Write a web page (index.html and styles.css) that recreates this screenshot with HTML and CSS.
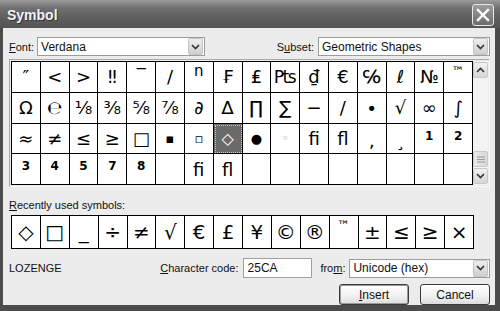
FILE: index.html
```html
<!DOCTYPE html>
<html lang="en">
<head>
  <meta charset="UTF-8">
  <title>Symbol</title>
  <link rel="stylesheet" href="styles.css">
</head>
<body>
  <div class="window">
    <div class="titlebar">
      <span class="title">Symbol</span>
      <span class="closeBtn">
        <svg width="14" height="14" viewBox="0 0 14 14"><path d="M2 2 L12 12 M12 2 L2 12" stroke="#fff" stroke-width="2.4" stroke-linecap="square"/></svg>
      </span>
    </div>

    <div class="dialog">
      <div class="topRow">
        <label class="lbl"><u>F</u>ont:</label>
        <div class="select fontSelect">
          <span>Verdana</span>
          <span class="dropBtn"><svg width="9" height="6" viewBox="0 0 9 6"><path d="M1 1 L4.5 4.5 L8 1" fill="none" stroke="#333" stroke-width="1.6"/></svg></span>
        </div>
        <label class="lbl subsetLbl">S<u>u</u>bset:</label>
        <div class="select subsetSelect">
          <span>Geometric Shapes</span>
          <span class="dropBtn"><svg width="9" height="6" viewBox="0 0 9 6"><path d="M1 1 L4.5 4.5 L8 1" fill="none" stroke="#333" stroke-width="1.6"/></svg></span>
        </div>
      </div>

      <div class="gridFrame">
        <div class="symGrid" id="symGrid"></div>
        <div class="scrollbar">
          <span class="scrollBtn"><svg width="9" height="6" viewBox="0 0 9 6"><path d="M1 5 L4.5 1.5 L8 5" fill="none" stroke="#333" stroke-width="1.6"/></svg></span>
          <span class="track"></span>
          <span class="thumb"><svg width="8" height="7" viewBox="0 0 8 7"><path d="M0 1 H8 M0 3.5 H8 M0 6 H8" stroke="#999" stroke-width="1"/></svg></span>
          <span class="scrollBtn"><svg width="9" height="6" viewBox="0 0 9 6"><path d="M1 1 L4.5 4.5 L8 1" fill="none" stroke="#333" stroke-width="1.6"/></svg></span>
        </div>
      </div>

      <div class="lbl recentLbl"><u>R</u>ecently used symbols:</div>
      <div class="recentGrid" id="recentGrid"></div>

      <div class="infoRow">
        <span class="lbl charName">LOZENGE</span>
        <label class="lbl"><u>C</u>haracter code:</label>
        <div class="textBox">25CA</div>
        <label class="lbl fromLbl">fro<u>m</u>:</label>
        <div class="select fromSelect">
          <span>Unicode (hex)</span>
          <span class="dropBtn"><svg width="9" height="6" viewBox="0 0 9 6"><path d="M1 1 L4.5 4.5 L8 1" fill="none" stroke="#333" stroke-width="1.6"/></svg></span>
        </div>
      </div>

      <div class="buttonRow">
        <button class="btn defaultBtn"><u>I</u>nsert</button>
        <button class="btn">Cancel</button>
      </div>
    </div>
  </div>

  <script>
    // [glyph, extra class]
    const symbols = [
      ['″'], ['<'], ['>'], ['‼'], ['‾', 'top'], ['/'], ['n', 'top mid'], ['₣'],
      ['₤'], ['₧'], ['₫'], ['€'], ['℅'], ['ℓ'], ['№'], ['™', 'top small'],
      ['Ω'], ['℮'], ['⅛'], ['⅜'], ['⅝'], ['⅞'], ['∂'], ['∆'],
      ['∏'], ['∑'], ['−'], ['∕'], ['∙'], ['√'], ['∞'], ['∫'],
      ['≈'], ['≠'], ['≤'], ['≥'], ['□'], ['▪', 'small'], ['▫', 'small'], ['◇', 'selected'],
      ['●', 'small'], ['◦', 'faint'], ['ﬁ'], ['ﬂ'], ['‚', 'low'], ['¸', 'low'], ['1', 'top digit'], ['2', 'top digit'],
      ['3', 'top digit'], ['4', 'top digit'], ['5', 'top digit'], ['7', 'top digit'], ['8', 'top digit'], [''], ['ﬁ'], ['ﬂ'],
      [''], [''], [''], [''], [''], [''], [''], ['']
    ];
    const recent = ['◇', '□', '_', '÷', '≠', '√', '€', '£', '¥', '©', '®', '™', '±', '≤', '≥', '×'];

    function fill(id, list) {
      const grid = document.getElementById(id);
      list.forEach((item) => {
        const cell = document.createElement('div');
        const sym = Array.isArray(item) ? item : [item];
        cell.className = 'cell ' + (sym[1] || '');
        cell.textContent = sym[0];
        grid.appendChild(cell);
      });
    }

    fill('symGrid', symbols);
    fill('recentGrid', recent);
    document.querySelectorAll('#recentGrid .cell')[11].classList.add('top', 'small');
  </script>
</body>
</html>
```

FILE: styles.css
```css
body {
  margin: 0;
  font-family: 'Liberation Sans', Arial, sans-serif;
  font-size: 11px;
  color: #111;
}

.window {
  width: 500px;
  height: 311px;
  display: flex;
  flex-direction: column;
  background: #4b4b4b;
}

.titlebar {
  height: 28px;
  flex-shrink: 0;
  display: flex;
  align-items: center;
  justify-content: space-between;
  padding: 0 6px 0 7px;
  background: linear-gradient(to bottom, #9a9a9a, #6f6f6f 30%, #5c5c5c 70%, #555);
}

.title {
  font-weight: bold;
  font-size: 14px;
  color: #f2f2f2;
  text-shadow: 1px 1px 0 #333;
  margin-top: 2px;
}

.closeBtn {
  width: 20px;
  height: 20px;
  border: 1px solid #e8e8e8;
  border-radius: 3px;
  background: linear-gradient(to bottom, #9c9c9c, #6c6c6c);
  display: flex;
  align-items: center;
  justify-content: center;
  margin-top: 2px;
}

.dialog {
  flex: 1;
  background: #ececec;
  border-left: 3px solid #4b4b4b;
  border-right: 5px solid #4b4b4b;
  border-bottom: 6px solid #4b4b4b;
  padding: 9px 5px 0 6px;
  display: flex;
  flex-direction: column;
}

.lbl {
  white-space: nowrap;
}

.topRow {
  display: flex;
  align-items: center;
  height: 19px;
}

.select {
  height: 19px;
  box-sizing: border-box;
  border: 1px solid #9c9c9c;
  background: #fff;
  display: flex;
  align-items: center;
  justify-content: space-between;
  padding-left: 3px;
  font-size: 12px;
}

.dropBtn {
  width: 13px;
  height: 15px;
  margin-right: 1px;
  border: 1px solid #c4c4c4;
  border-radius: 2px;
  background: linear-gradient(to bottom, #eeeeee, #cfcfcf);
  display: flex;
  align-items: center;
  justify-content: center;
}

.fontSelect {
  width: 168px;
  margin-left: 3px;
}

.subsetLbl {
  margin-left: auto;
  margin-right: 4px;
}

.subsetSelect {
  width: 172px;
}

.gridFrame {
  margin-top: 3px;
  display: flex;
  border: 1px solid #a8a8a8;
  border-right-color: #f8f8f8;
  border-bottom-color: #f8f8f8;
  padding: 1px;
  width: 481px;
  box-sizing: border-box;
}

.symGrid {
  width: 463px;
  height: 124px;
  box-sizing: border-box;
  display: grid;
  grid-template-columns: repeat(16, 1fr);
  grid-template-rows: repeat(4, 1fr);
  border-top: 1px solid #000;
  border-left: 1px solid #000;
  background: #fff;
}

.cell {
  border-right: 1px solid #000;
  border-bottom: 1px solid #000;
  display: flex;
  align-items: center;
  justify-content: center;
  font-family: 'DejaVu Sans', Verdana, sans-serif;
  font-size: 18px;
  overflow: hidden;
  color: #000;
}

.cell.top {
  align-items: flex-start;
  padding-top: 2px;
}

.cell.small {
  font-size: 13px;
}

.cell.mid {
  font-size: 15px;
  padding-top: 0;
}

.cell.digit {
  font-size: 12px;
  font-weight: bold;
  padding-top: 5px;
}

.cell.low {
  align-items: flex-end;
  padding-bottom: 2px;
}

.cell.faint {
  color: #999;
  font-size: 12px;
}

.cell.selected {
  background: #6a6a6a;
  color: #fff;
  font-size: 16px;
  outline: 1px dotted #c8c8c8;
  outline-offset: -2px;
}

.scrollbar {
  width: 15px;
  display: flex;
  flex-direction: column;
  background: #f3f3f3;
}

.scrollBtn {
  height: 14px;
  margin: 1px 0;
  border: 1px solid #c8c8c8;
  border-radius: 2px;
  background: linear-gradient(to bottom, #f2f2f2, #d6d6d6);
  display: flex;
  align-items: center;
  justify-content: center;
}

.track {
  flex: 1;
}

.thumb {
  height: 14px;
  border: 1px solid #c8c8c8;
  border-radius: 2px;
  background: linear-gradient(to right, #eaeaea, #d8d8d8);
  display: flex;
  align-items: center;
  justify-content: center;
}

.recentLbl {
  margin-top: 12px;
}

.recentGrid {
  margin-top: 4px;
  margin-left: 2px;
  width: 463px;
  height: 34px;
  box-sizing: border-box;
  display: grid;
  grid-template-columns: repeat(16, 1fr);
  border-top: 1px solid #000;
  border-left: 1px solid #000;
  background: #fff;
}

.recentGrid .cell {
  font-size: 20px;
}

.recentGrid .cell.small {
  font-size: 13px;
}

.infoRow {
  margin-top: 9px;
  display: flex;
  align-items: center;
  height: 20px;
}

.charName {
  width: 154px;
}

.textBox {
  width: 71px;
  height: 20px;
  box-sizing: border-box;
  margin-left: 4px;
  border: 1px solid #a0a0a0;
  background: #fff;
  padding-left: 4px;
  display: flex;
  align-items: center;
  font-size: 12px;
}

.fromLbl {
  margin-left: 8px;
  margin-right: 4px;
}

.fromSelect {
  width: 143px;
}

.buttonRow {
  margin-top: 6px;
  display: flex;
  justify-content: flex-end;
  gap: 11px;
}

.btn {
  width: 70px;
  height: 21px;
  font-family: 'Liberation Sans', Arial, sans-serif;
  font-size: 12px;
  color: #111;
  border: 1px solid #3a3a3a;
  border-radius: 3px;
  background: linear-gradient(to bottom, #ffffff, #f0f0f0 60%, #dcdcdc);
  padding: 0;
}

.defaultBtn {
  box-shadow: inset 0 0 0 1px #9a9a9a;
}
```
